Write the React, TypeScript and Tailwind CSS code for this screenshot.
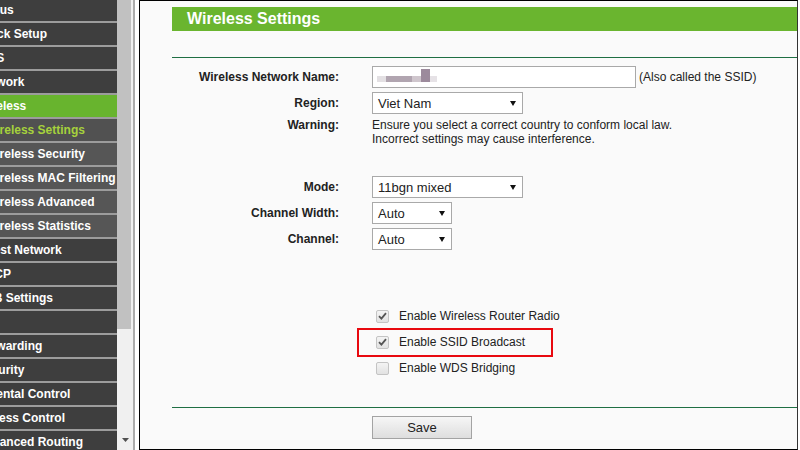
import React from 'react'

type MenuItem = { label: string; kind: 'main' | 'sub' | 'active' | 'current' }

const menu: MenuItem[] = [
  { label: 'Status', kind: 'main' },
  { label: 'Quick Setup', kind: 'main' },
  { label: 'WPS', kind: 'main' },
  { label: 'Network', kind: 'main' },
  { label: 'Wireless', kind: 'active' },
  { label: 'Wireless Settings', kind: 'current' },
  { label: 'Wireless Security', kind: 'sub' },
  { label: 'Wireless MAC Filtering', kind: 'sub' },
  { label: 'Wireless Advanced', kind: 'sub' },
  { label: 'Wireless Statistics', kind: 'sub' },
  { label: 'Guest Network', kind: 'main' },
  { label: 'DHCP', kind: 'main' },
  { label: 'USB Settings', kind: 'main' },
  { label: '', kind: 'main' },
  { label: 'Forwarding', kind: 'main' },
  { label: 'Security', kind: 'main' },
  { label: 'Parental Control', kind: 'main' },
  { label: 'Access Control', kind: 'main' },
  { label: 'Advanced Routing', kind: 'main' },
]

function Arrow() {
  return (
    <svg width="6" height="5" viewBox="0 0 6 5" className="shrink-0">
      <polygon points="0,0 6,0 3,5" fill="#111" />
    </svg>
  )
}

function Select({ value, width }: { value: string; width: string }) {
  return (
    <div
      className={`${width} h-[22px] border border-[#a9a9a9] bg-white flex items-center justify-between pl-[5px] pr-[6px] pt-[1px] text-[13px] text-[#222]`}
    >
      <span>{value}</span>
      <Arrow />
    </div>
  )
}

function Check({ checked, label }: { checked: boolean; label: string }) {
  return (
    <div className="flex items-center h-[26px] pl-[4px]">
      <div className="w-[13px] h-[13px] border border-[#c4c4c4] rounded-[2px] bg-gradient-to-b from-[#f4f4f4] to-[#e2e2e2] flex items-center justify-center">
        {checked && (
          <svg width="9" height="8" viewBox="0 0 9 8">
            <path d="M1 4.2 L3.4 6.6 L8 1.2" stroke="#555" strokeWidth="1.8" fill="none" />
          </svg>
        )}
      </div>
      <span className="ml-[10px] text-[12px] text-[#222]">{label}</span>
    </div>
  )
}

function Row({ label, children }: { label: string; children: React.ReactNode }) {
  return (
    <div className="flex items-center">
      <div className="w-[167px] text-right font-bold text-[12px] text-[#222]">{label}</div>
      <div className="ml-[33px] flex items-center">{children}</div>
    </div>
  )
}

export default function App() {
  return (
    <div className="w-[800px] h-[450px] flex overflow-hidden bg-white font-['Liberation_Sans',Arial,sans-serif]">
      {/* Menu (cropped on the left, as in the screenshot) */}
      <div className="w-[117px] h-full overflow-hidden bg-[#9c9c9c]">
        <div className="-mt-[1px] flex flex-col">
          {menu.map((item, i) => (
            <div key={i} className="border-b-2 border-[#9c9c9c]">
              <div
                className={`h-[22px] flex items-center whitespace-nowrap font-bold text-[12px] ${
                  item.kind === 'active'
                    ? 'bg-[#68b42e] text-white'
                    : item.kind === 'current'
                    ? 'bg-[#515151] text-[#a6d13c]'
                    : item.kind === 'sub'
                    ? 'bg-[#565656] text-white'
                    : 'bg-[#3e3e3e] text-white'
                }`}
              >
                <span className={item.kind === 'sub' || item.kind === 'current' ? '-ml-[15px]' : '-ml-[23px]'}>
                  {item.label}
                </span>
              </div>
            </div>
          ))}
        </div>
      </div>

      {/* Scrollbar */}
      <div className="w-[16px] h-full bg-[#f0f0f0] flex flex-col justify-between">
        <div className="w-[14px] h-[329px] bg-[#c1c1c1]" />
        <div className="h-[12px] flex items-start justify-center">
          <svg width="7" height="4" viewBox="0 0 7 4">
            <polygon points="0,0 7,0 3.5,4" fill="#505050" />
          </svg>
        </div>
      </div>
      <div className="w-[2px] h-full bg-[#ababab]" />
      <div className="w-[4px] h-full bg-white" />

      {/* Content frame */}
      <div className="w-[659px] h-full border border-black border-r-[#333] bg-[#fafafa] flex flex-col">
        <div className="ml-[32px] mt-[6px] h-[24px] bg-[#6ab52f] flex items-center pl-[15px]">
          <span className="text-white font-bold text-[16px]">Wireless Settings</span>
        </div>
        <div className="ml-[32px] mt-[26px] h-[1px] bg-[#1f6f43]" />

        <div className="mt-[8px] ml-[32px] flex flex-col">
          <Row label="Wireless Network Name:">
            <div className="w-[264px] h-[22px] border border-[#a9a9a9] bg-white flex items-end pl-[4px] pb-[5px]">
              <div className="w-[9px] h-[6px] bg-[#e3e0e3]" />
              <div className="w-[26px] h-[6px] bg-[#b1a5b0]" />
              <div className="w-[9px] h-[6px] bg-[#cfc6cd]" />
              <div className="w-[9px] h-[13px] bg-[#9c8a9c]" />
              <div className="w-[7px] h-[6px] bg-[#e6e2e6]" />
            </div>
            <span className="ml-[3px] text-[12px] text-[#222]">(Also called the SSID)</span>
          </Row>
          <div className="mt-[4px]">
            <Row label="Region:">
              <Select value="Viet Nam" width="w-[151px]" />
            </Row>
          </div>
          <div className="mt-[4px] flex items-start">
            <div className="w-[167px] text-right font-bold text-[12px] leading-[14px] text-[#222]">Warning:</div>
            <div className="ml-[33px] text-[12px] leading-[14px] text-[#222]">
              <div>Ensure you select a correct country to conform local law.</div>
              <div>Incorrect settings may cause interference.</div>
            </div>
          </div>
          <div className="mt-[30px]">
            <Row label="Mode:">
              <Select value="11bgn mixed" width="w-[151px]" />
            </Row>
          </div>
          <div className="mt-[4px]">
            <Row label="Channel Width:">
              <Select value="Auto" width="w-[80px]" />
            </Row>
          </div>
          <div className="mt-[4px]">
            <Row label="Channel:">
              <Select value="Auto" width="w-[80px]" />
            </Row>
          </div>

          <div className="mt-[53px] ml-[200px] flex flex-col">
            <Check checked label="Enable Wireless Router Radio" />
            <div className="relative">
              <Check checked label="Enable SSID Broadcast" />
              <div className="absolute left-[-15px] top-[-1px] w-[196px] h-[29px] border-2 border-[#e8090f]" />
            </div>
            <Check checked={false} label="Enable WDS Bridging" />
          </div>
        </div>

        <div className="ml-[32px] mt-[26px] h-[1px] bg-[#1f6f43]" />
        <div className="mt-[8px] ml-[232px]">
          <div className="w-[100px] h-[23px] border border-[#a3a3a3] bg-gradient-to-b from-[#f6f6f6] to-[#dedede] flex items-center justify-center text-[13px] text-[#222]">
            Save
          </div>
        </div>
      </div>
      <div className="w-[2px] h-full bg-white" />
    </div>
  )
}
